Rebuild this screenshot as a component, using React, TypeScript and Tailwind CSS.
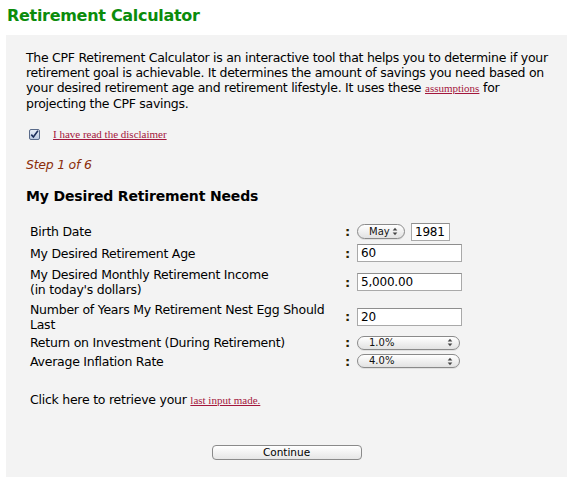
import React from "react";

const V = { fontFamily: '"DejaVu Sans", Verdana, sans-serif' };
const S = { fontFamily: '"Liberation Serif", "Times New Roman", serif' };

function Arrows() {
  return (
    <svg width="6" height="9" viewBox="0 0 6 9" className="shrink-0">
      <path d="M3 0.8 L5.3 3.6 L0.7 3.6 Z" fill="#444" />
      <path d="M3 8.2 L5.3 5.4 L0.7 5.4 Z" fill="#444" />
    </svg>
  );
}

function Select({ value, w, h }: { value: string; w: string; h: string }) {
  return (
    <div
      className={`${w} ${h} flex items-center justify-between rounded-full border border-[#8a8a8a] bg-gradient-to-b from-white to-[#e2e2e2] pl-[11px] pr-[6px] text-[10px] text-[#111] shadow-[0_1px_0_rgba(0,0,0,0.08)]`}
      style={V}
    >
      <span className="leading-none">{value}</span>
      <Arrows />
    </div>
  );
}

function Input({ value, w }: { value: string; w: string }) {
  return (
    <div
      className={`${w} h-[18px] flex items-center border border-[#a9a9a9] border-t-[#8e8e8e] bg-white pl-[3px] text-[12px] tracking-[-0.2px] text-black`}
      style={V}
    >
      {value}
    </div>
  );
}

function Row({ h, label, children }: { h: string; label: React.ReactNode; children: React.ReactNode }) {
  return (
    <div className={`flex items-center ${h}`}>
      <div className="w-[315px] whitespace-nowrap text-[12.5px] leading-[15px] tracking-[-0.25px] text-black">{label}</div>
      <div className="w-[12px] text-[13px] font-bold leading-[15px] text-[#2b2300]">:</div>
      <div className="flex items-center gap-[6px]">{children}</div>
    </div>
  );
}

export default function App() {
  return (
    <div className="w-[570px] h-[480px] bg-white" style={V}>
      <div className="h-[35px] whitespace-nowrap pl-[7px] pt-[6px] text-[16px] font-bold leading-[20px] tracking-[-0.3px] text-[#0b8c0b]">
        Retirement Calculator
      </div>
      <div className="ml-[6px] mr-[3px] h-[442px] bg-[#f3f3f3] pl-[20px] pt-[15px]">
        <p className="whitespace-nowrap text-[12.5px] leading-[15px] tracking-[-0.28px] text-black">
          The CPF Retirement Calculator is an interactive tool that helps you to determine if your
          <br />
          retirement goal is achievable. It determines the amount of savings you need based on
          <br />
          your desired retirement age and retirement lifestyle. It uses these{" "}
          <a className="text-[11px] tracking-normal text-[#a3163c] underline" style={S}>
            assumptions
          </a>{" "}
          for
          <br />
          projecting the CPF savings.
        </p>

        <div className="mt-[16px] flex h-[15px] items-center pl-[3px]">
          <svg width="11" height="11" viewBox="0 0 11 11" className="shrink-0">
            <defs>
              <linearGradient id="cb" x1="0" y1="0" x2="0" y2="1">
                <stop offset="0" stopColor="#e9eef7" />
                <stop offset="1" stopColor="#b9c8e0" />
              </linearGradient>
            </defs>
            <rect x="0.5" y="0.5" width="10" height="10" rx="1.5" fill="url(#cb)" stroke="#5a6b8a" />
            <path d="M2.3 5.6 L4.4 8 L8.9 1.8" fill="none" stroke="#1d2f5c" strokeWidth="1.6" />
          </svg>
          <a className="ml-[13px] text-[11px] text-[#a3163c] underline" style={S}>
            I have read the disclaimer
          </a>
        </div>

        <div className="mt-[15px] text-[12.5px] italic leading-[15px] tracking-[-0.25px] text-[#8b2e0a]">Step 1 of 6</div>

        <div className="mt-[15px] whitespace-nowrap text-[14px] font-bold leading-[18px] tracking-[-0.15px] text-black">
          My Desired Retirement Needs
        </div>

        <div className="mt-[16px] pl-[4px]">
          <Row h="h-[21px]" label="Birth Date">
            <Select value="May" w="w-[48px]" h="h-[15px]" />
            <Input value="1981" w="w-[39px]" />
          </Row>
          <Row h="h-[22px]" label="My Desired Retirement Age">
            <Input value="60" w="w-[105px]" />
          </Row>
          <Row
            h="h-[36px]"
            label={
              <>
                My Desired Monthly Retirement Income
                <br />
                (in today's dollars)
              </>
            }
          >
            <Input value="5,000.00" w="w-[105px]" />
          </Row>
          <Row
            h="h-[33px]"
            label={
              <>
                Number of Years My Retirement Nest Egg Should
                <br />
                Last
              </>
            }
          >
            <Input value="20" w="w-[105px]" />
          </Row>
          <Row h="h-[19px]" label="Return on Investment (During Retirement)">
            <Select value="1.0%" w="w-[103px]" h="h-[14px]" />
          </Row>
          <Row h="h-[18px]" label="Average Inflation Rate">
            <Select value="4.0%" w="w-[103px]" h="h-[14px]" />
          </Row>
        </div>

        <div className="mt-[22px] pl-[4px] text-[12.5px] leading-[15px] tracking-[-0.25px] text-black">
          Click here to retrieve your{" "}
          <a className="text-[11px] tracking-normal text-[#a3163c] underline" style={S}>
            last input made.
          </a>
        </div>

        <div className="mt-[37px] flex justify-center pr-[20px]">
          <button
            className="flex h-[15px] w-[150px] items-center justify-center rounded-[4px] border border-[#8a8a8a] bg-gradient-to-b from-white to-[#e6e6e6] text-[10.5px] leading-none text-black"
            style={V}
          >
            Continue
          </button>
        </div>
      </div>
    </div>
  );
}
